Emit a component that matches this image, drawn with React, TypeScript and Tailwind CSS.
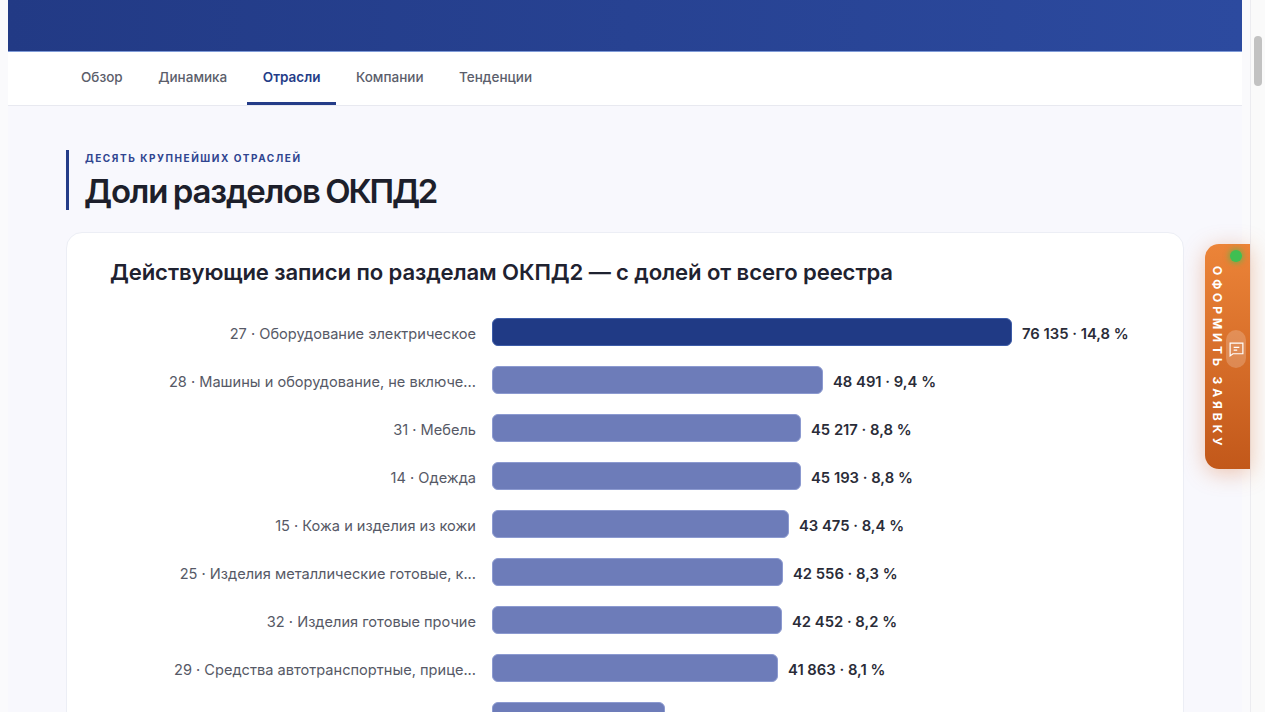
const tabs = ['Обзор', 'Динамика', 'Отрасли', 'Компании', 'Тенденции'];

const rows = [
  { label: '27 · Оборудование электрическое', count: 76135, value: '76 135 · 14,8 %' },
  { label: '28 · Машины и оборудование, не включе...', count: 48491, value: '48 491 · 9,4 %' },
  { label: '31 · Мебель', count: 45217, value: '45 217 · 8,8 %' },
  { label: '14 · Одежда', count: 45193, value: '45 193 · 8,8 %' },
  { label: '15 · Кожа и изделия из кожи', count: 43475, value: '43 475 · 8,4 %' },
  { label: '25 · Изделия металлические готовые, к...', count: 42556, value: '42 556 · 8,3 %' },
  { label: '32 · Изделия готовые прочие', count: 42452, value: '42 452 · 8,2 %' },
  { label: '29 · Средства автотранспортные, прице...', count: 41863, value: '41 863 · 8,1 %' },
  { label: '', count: 25330, value: '' },
];

const maxCount = rows[0].count;

export default function App() {
  return (
    <div className="relative flex h-[712px] w-[1265px] overflow-hidden bg-[#f8f8fd] font-['Inter',sans-serif]">
      <main className="flex w-[1250px] flex-col border-x-8 border-x-[#fafafc]">
        <div className="h-[52px] shrink-0 border-b border-b-[#7f9bd8] bg-gradient-to-r from-[#223a85] to-[#2c4a9f]" />
        <nav className="flex h-[54px] shrink-0 gap-[3.5px] border-b border-b-[#e8e9f0] bg-white pl-[57px]">
          {tabs.map((tab) => (
            <div
              key={tab}
              className={`flex items-center border-b-[3px] px-4 text-[13.5px] font-medium ${
                tab === 'Отрасли' ? 'border-b-[#243c88] font-semibold text-[#243c88]' : 'border-b-transparent text-[#5b5e6b]'
              }`}
            >
              {tab}
            </div>
          ))}
        </nav>

        <section className="px-[58px] pt-[44px]">
          <div className="flex h-[60px] flex-col border-l-[3px] border-l-[#243c88] pl-[15px]">
            <div className="pl-px text-[10px] leading-[16px] font-bold tracking-[1.55px] text-[#2f4590] uppercase">
              Десять крупнейших отраслей
            </div>
            <h2 className="pt-[5px] text-[33px] leading-[40px] font-semibold tracking-[-1.2px] text-[#1d1f2b] [word-spacing:-1.5px]">
              Доли разделов <span className="tracking-[-2.2px]">ОКПД2</span>
            </h2>
          </div>

          <div className="mt-[22px] h-[600px] w-[1118px] rounded-2xl border border-[#eceef5] bg-white pt-[23px] pl-[43px]">
            <h3 className="text-[22.1px] leading-[32px] font-semibold tracking-[-0.1px] text-[#1f2230]">
              Действующие записи по разделам ОКПД2 — с долей от всего реестра
            </h3>
            <div className="mt-[30px] flex flex-col gap-5">
              {rows.map((row, i) => (
                <div key={i} className="flex h-7 items-center">
                  <div className="w-[366px] pt-[5px] text-right text-[14.6px] whitespace-nowrap text-[#565966]">{row.label}</div>
                  <div
                    className={`ml-4 h-7 rounded-md border ${i === 0 ? 'border-[#3d5ca8] bg-[#203a85]' : 'border-[#8c9ad0] bg-[#6d7cb9]'}`}
                    style={{ width: Math.round((row.count / maxCount) * 520) }}
                  />
                  <div className="ml-2.5 pt-1 text-[14.8px] font-semibold whitespace-nowrap text-[#2a2c38]">{row.value}</div>
                </div>
              ))}
            </div>
          </div>
        </section>
      </main>

      <div className="relative w-[15px] shrink-0 border-l border-l-[#ececf0] bg-[#fafafa]">
        <div className="absolute top-[36px] left-[3px] h-[50px] w-[8px] rounded-full bg-[#c2c2c2]" />
      </div>

      <button className="absolute top-[244px] left-[1205px] h-[225px] w-[45px] overflow-hidden rounded-l-[14px] bg-gradient-to-b from-[#ec8438] to-[#c2581a] shadow-[0_4px_22px_rgba(214,96,32,0.35)]">
        <span className="absolute top-[6px] left-[25px] h-3 w-3 rounded-full bg-[#3fbf52] shadow-[0_0_5px_2px_rgba(63,191,82,0.5)]" />
        <span className="absolute top-[86px] left-[21px] flex h-[38px] w-[20px] items-center justify-center rounded-full bg-white/20">
          <svg width="17" height="17" viewBox="0 0 24 24" fill="none" stroke="white" strokeWidth="1.7">
            <path d="M3 3h18v15H7l-4 3z" />
            <path d="M8 9h8M8 13h5" />
          </svg>
        </span>
        <span className="absolute top-[22px] left-[5px] text-[12px] leading-[14px] font-bold tracking-[3.9px] whitespace-nowrap text-white [writing-mode:vertical-rl]">
          ОФОРМИТЬ ЗАЯВКУ
        </span>
      </button>
    </div>
  );
}
